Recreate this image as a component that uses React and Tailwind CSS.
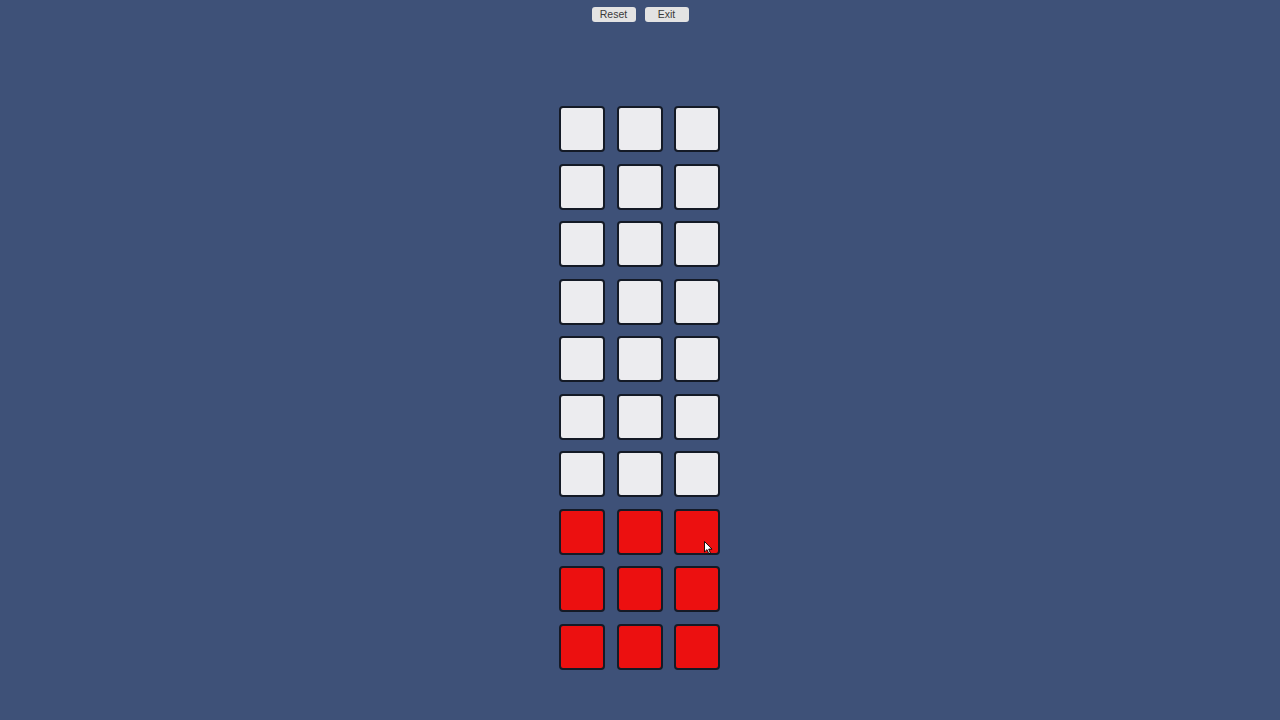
const ROWS = 10;
const COLS = 3;
const FILLED_FROM = 7;

function Cell({ filled, cursor }) {
  return (
    <div
      className={
        "relative w-[46px] h-[46px] rounded-[4px] border-2 border-[#141a26] " +
        (filled ? "bg-[#ec1010]" : "bg-[#ececef]")
      }
    >
      {cursor && (
        <svg
          className="absolute left-[28px] top-[30px]"
          width="9"
          height="14"
          viewBox="0 0 9 14"
        >
          <path d="M0.5 0.5 L0.5 11 L3 8.6 L4.8 12.8 L6.4 12.1 L4.7 8.1 L8 8.1 Z" fill="#fff" stroke="#000" strokeWidth="0.9" />
        </svg>
      )}
    </div>
  );
}

export default function App() {
  const cells = [];
  for (let r = 0; r < ROWS; r++) {
    for (let c = 0; c < COLS; c++) {
      cells.push(
        <Cell key={r + "-" + c} filled={r >= FILLED_FROM} cursor={r === 7 && c === 2} />
      );
    }
  }

  return (
    <div className="w-[1280px] h-[720px] bg-[#3e5178] flex flex-col items-center font-['Liberation_Sans',Arial,sans-serif] overflow-hidden">
      <div className="flex gap-[9px] mt-[7px]">
        <button className="w-[44px] h-[15px] rounded-[3px] bg-[#e3e3e3] text-[10.5px] leading-[15px] text-[#3a3a3a]">
          Reset
        </button>
        <button className="w-[44px] h-[15px] rounded-[3px] bg-[#e3e3e3] text-[10.5px] leading-[15px] text-[#3a3a3a]">
          Exit
        </button>
      </div>
      <div className="grid grid-cols-[repeat(3,46px)] gap-x-[11.5px] gap-y-[11.5px] mt-[84px] mr-[1px]">
        {cells}
      </div>
    </div>
  );
}
